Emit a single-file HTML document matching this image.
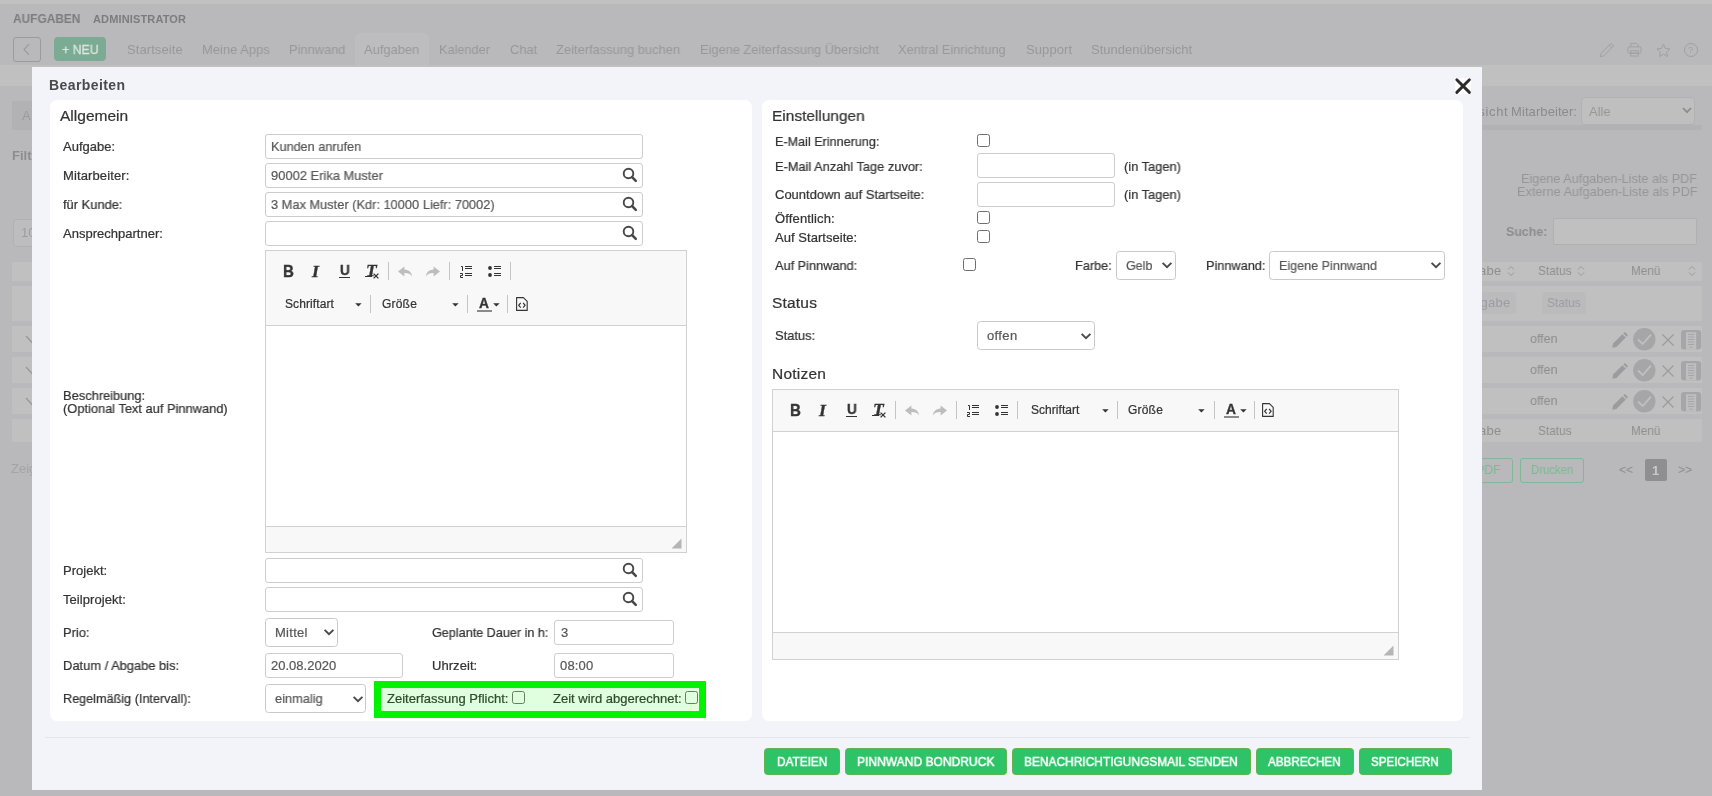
<!DOCTYPE html>
<html lang="de"><head><meta charset="utf-8"><title>Aufgaben</title>
<style>
html,body{margin:0;padding:0}
body{width:1712px;height:796px;overflow:hidden;position:relative;background:#b9b9bc;font-family:"Liberation Sans",sans-serif}
.a{position:absolute;box-sizing:border-box}
.t{position:absolute;white-space:pre;transform-origin:0 0;will-change:transform;font-family:"Liberation Sans",sans-serif}
.in{position:absolute;box-sizing:border-box;background:#fff;border:1px solid #cdcdcd;border-radius:3px}
.sel{position:absolute;box-sizing:border-box;background:#fff;border:1px solid #c9c9c9;border-radius:3.5px}
.cb{position:absolute;box-sizing:border-box;width:13px;height:13px;background:#fff;border:1px solid #6f6f6f;border-radius:2.5px}
.btn{position:absolute;box-sizing:border-box;background:#2dc366;border:1px solid #66b04f;border-radius:3.5px;height:27px;top:748px}
.sep{position:absolute;width:1px;background:#c4c4c4;height:18px}
.row{position:absolute;background:#c0c0c1;left:12px;width:1690px}
svg{position:absolute;overflow:visible}
.m{-webkit-text-stroke:0.22px currentColor}
.ser{font-family:"Liberation Serif",serif}
</style></head>
<body>
<!-- ================= dimmed background page ================= -->
<div class="a" style="left:0;top:0;width:1712px;height:4px;background:#c1c1c1"></div>
<div class="a" style="left:0;top:4px;width:1712px;height:61px;background:#b9b9bb"></div>
<div class="a" style="left:0;top:65px;width:1712px;height:20.5px;background:#c0c0c0"></div>
<!-- back button -->
<div class="a" style="left:13px;top:37px;width:28px;height:24.5px;border:1px solid #9b9b9d;border-radius:3px"></div>
<svg style="left:22px;top:43px" width="9" height="13" viewBox="0 0 9 13"><path d="M7 1.2 L2 6.5 L7 11.8" fill="none" stroke="#9b9b9d" stroke-width="1.2"/></svg>
<!-- NEU -->
<div class="a" style="left:54px;top:37px;width:52px;height:23.75px;background:#7bac93;border-radius:4px"></div>
<!-- active tab -->
<div class="a" style="left:355px;top:33.25px;width:73.75px;height:31.75px;background:#bdbdbf;border-radius:5px 5px 0 0"></div>
<!-- header icons -->
<svg style="left:1599px;top:42px" width="16" height="16" viewBox="0 0 16 16"><path d="M1.2 14.8 L2.2 11.2 L11.3 2.1 a1.3 1.3 0 0 1 1.8 0 l0.8 0.8 a1.3 1.3 0 0 1 0 1.8 L4.8 13.8 Z M10.2 3.2 L12.8 5.8" fill="none" stroke="#a0a0a2" stroke-width="1"/></svg>
<svg style="left:1627px;top:42px" width="15" height="15.5" viewBox="0 0 16 16" preserveAspectRatio="none"><g fill="none" stroke="#a0a0a2" stroke-width="1"><path d="M4 5 V1.5 H10.5 L12 3 V5"/><rect x="1" y="5" width="14" height="6.5" rx="1.5"/><rect x="4" y="9" width="8" height="5.5"/><path d="M4 11.5 H12"/></g></svg>
<svg style="left:1655.6px;top:42.6px" width="15" height="15" viewBox="0 0 15 15"><path d="M7.5 1.2 L9.4 5.4 L14 5.9 L10.6 9 L11.5 13.5 L7.5 11.2 L3.5 13.5 L4.4 9 L1 5.9 L5.6 5.4 Z" fill="none" stroke="#a0a0a2" stroke-width="1" stroke-linejoin="round"/></svg>
<div class="a" style="left:1684px;top:43px;width:14px;height:14px;border:1px solid #a0a0a2;border-radius:50%"></div>
<span class="t" style="left:1688.3px;top:45px;font-size:9.5px;line-height:10px;color:#a0a0a2">?</span>
<!-- filter select right -->
<div class="a" style="left:1580.5px;top:97px;width:114.5px;height:28px;border:1px solid #b1b1b3;border-radius:4px;background:#bfbfc0"></div>
<svg style="left:1681.5px;top:107px" width="10" height="7" viewBox="0 0 10 7"><path d="M1 1 L5 5.2 L9 1" fill="none" stroke="#8d8d8f" stroke-width="1.8"/></svg>
<div class="a" style="left:12px;top:125px;width:1690px;height:5px;background:#b2b2b4"></div>
<!-- left bits -->
<div class="a" style="left:12px;top:101px;width:40px;height:28.5px;background:#b2b2b4"></div>
<div class="a" style="left:12.5px;top:218.5px;width:60px;height:28px;border:1px solid #b1b1b3;border-radius:4px;background:#bdbdbf"></div>
<!-- search input -->
<div class="a" style="left:1553.3px;top:218px;width:143.5px;height:26.6px;border:1px solid #b0b0b2;border-radius:2px;background:#c0c0c1"></div>
<!-- table rows -->
<div class="row" style="top:262px;height:18.5px"></div>
<div class="row" style="top:285.6px;height:35px"></div>
<div class="row" style="top:326px;height:26px"></div>
<div class="row" style="top:356.7px;height:26px"></div>
<div class="row" style="top:388px;height:26px"></div>
<div class="row" style="top:419px;height:23px"></div>
<div class="a" style="left:1456px;top:292px;width:60px;height:22px;background:#bbbbbd;border-radius:3px"></div>
<div class="a" style="left:1542px;top:292px;width:44px;height:22px;background:#bbbbbd;border-radius:3px"></div>
<svg style="left:1507.00px;top:265px" width="8" height="12" viewBox="0 0 8 12"><path d="M1 4.6 L4 1.4 L7 4.6 M1 7.4 L4 10.6 L7 7.4" fill="none" stroke="#9c9c9e" stroke-width="1"/></svg>
<svg style="left:1576.50px;top:265px" width="8" height="12" viewBox="0 0 8 12"><path d="M1 4.6 L4 1.4 L7 4.6 M1 7.4 L4 10.6 L7 7.4" fill="none" stroke="#9c9c9e" stroke-width="1"/></svg>
<svg style="left:1688.30px;top:265px" width="8" height="12" viewBox="0 0 8 12"><path d="M1 4.6 L4 1.4 L7 4.6 M1 7.4 L4 10.6 L7 7.4" fill="none" stroke="#9c9c9e" stroke-width="1"/></svg>
<svg style="left:1612px;top:332.20px" width="16" height="16" viewBox="0 0 16 16"><path d="M0.3 15.7 L1 11.6 L10.4 2.2 L13.8 5.6 L4.4 15 Z M11.3 1.3 L12.2 0.5 a1 1 0 0 1 1.4 0 L15.5 2.4 a1 1 0 0 1 0 1.4 L14.7 4.7 Z" fill="#9c9c9e"/></svg>
<svg style="left:1632.7px;top:327.60px" width="23" height="23" viewBox="0 0 23 23"><circle cx="11.3" cy="11.3" r="11.2" fill="#a6a6a8"/><path d="M5 11.5 L9.7 16 L18 6.6" fill="none" stroke="#c0c0c1" stroke-width="1.8"/></svg>
<svg style="left:1662px;top:334.20px" width="12" height="12" viewBox="0 0 12 12"><path d="M0.5 0.5 L11.5 11.5 M11.5 0.5 L0.5 11.5" stroke="#9c9c9e" stroke-width="1.3" fill="none"/></svg>
<svg style="left:1680.8px;top:329.70px" width="21" height="20" viewBox="0 0 21 20"><rect x="0" y="0" width="20.2" height="19.6" rx="3" fill="#a6a6a8"/><rect x="5" y="2.2" width="10.2" height="17.4" fill="#bebebf"/><g stroke="#a6a6a8" stroke-width="1.1"><path d="M7 4.5 H13.2 M7 7 H13.2 M7 9.5 H13.2 M7 12 H13.2 M7 14.5 H13.2 M8.5 17.2 H11.7"/></g></svg>
<svg style="left:1612px;top:363.20px" width="16" height="16" viewBox="0 0 16 16"><path d="M0.3 15.7 L1 11.6 L10.4 2.2 L13.8 5.6 L4.4 15 Z M11.3 1.3 L12.2 0.5 a1 1 0 0 1 1.4 0 L15.5 2.4 a1 1 0 0 1 0 1.4 L14.7 4.7 Z" fill="#9c9c9e"/></svg>
<svg style="left:1632.7px;top:358.60px" width="23" height="23" viewBox="0 0 23 23"><circle cx="11.3" cy="11.3" r="11.2" fill="#a6a6a8"/><path d="M5 11.5 L9.7 16 L18 6.6" fill="none" stroke="#c0c0c1" stroke-width="1.8"/></svg>
<svg style="left:1662px;top:365.20px" width="12" height="12" viewBox="0 0 12 12"><path d="M0.5 0.5 L11.5 11.5 M11.5 0.5 L0.5 11.5" stroke="#9c9c9e" stroke-width="1.3" fill="none"/></svg>
<svg style="left:1680.8px;top:360.70px" width="21" height="20" viewBox="0 0 21 20"><rect x="0" y="0" width="20.2" height="19.6" rx="3" fill="#a6a6a8"/><rect x="5" y="2.2" width="10.2" height="17.4" fill="#bebebf"/><g stroke="#a6a6a8" stroke-width="1.1"><path d="M7 4.5 H13.2 M7 7 H13.2 M7 9.5 H13.2 M7 12 H13.2 M7 14.5 H13.2 M8.5 17.2 H11.7"/></g></svg>
<svg style="left:1612px;top:394.20px" width="16" height="16" viewBox="0 0 16 16"><path d="M0.3 15.7 L1 11.6 L10.4 2.2 L13.8 5.6 L4.4 15 Z M11.3 1.3 L12.2 0.5 a1 1 0 0 1 1.4 0 L15.5 2.4 a1 1 0 0 1 0 1.4 L14.7 4.7 Z" fill="#9c9c9e"/></svg>
<svg style="left:1632.7px;top:389.60px" width="23" height="23" viewBox="0 0 23 23"><circle cx="11.3" cy="11.3" r="11.2" fill="#a6a6a8"/><path d="M5 11.5 L9.7 16 L18 6.6" fill="none" stroke="#c0c0c1" stroke-width="1.8"/></svg>
<svg style="left:1662px;top:396.20px" width="12" height="12" viewBox="0 0 12 12"><path d="M0.5 0.5 L11.5 11.5 M11.5 0.5 L0.5 11.5" stroke="#9c9c9e" stroke-width="1.3" fill="none"/></svg>
<svg style="left:1680.8px;top:391.70px" width="21" height="20" viewBox="0 0 21 20"><rect x="0" y="0" width="20.2" height="19.6" rx="3" fill="#a6a6a8"/><rect x="5" y="2.2" width="10.2" height="17.4" fill="#bebebf"/><g stroke="#a6a6a8" stroke-width="1.1"><path d="M7 4.5 H13.2 M7 7 H13.2 M7 9.5 H13.2 M7 12 H13.2 M7 14.5 H13.2 M8.5 17.2 H11.7"/></g></svg>
<svg style="left:25px;top:335.20px" width="14" height="9" viewBox="0 0 14 9"><path d="M1 1 L7 7.5 L13 1" fill="none" stroke="#98989a" stroke-width="1.4"/></svg>
<svg style="left:25px;top:366.20px" width="14" height="9" viewBox="0 0 14 9"><path d="M1 1 L7 7.5 L13 1" fill="none" stroke="#98989a" stroke-width="1.4"/></svg>
<svg style="left:25px;top:397.20px" width="14" height="9" viewBox="0 0 14 9"><path d="M1 1 L7 7.5 L13 1" fill="none" stroke="#98989a" stroke-width="1.4"/></svg>
<!-- bottom buttons -->
<div class="a" style="left:1452px;top:458px;width:60.7px;height:24.8px;border:1px solid #7db995;border-radius:3px"></div>
<div class="a" style="left:1520px;top:458px;width:64px;height:24.8px;border:1px solid #7db995;border-radius:3px"></div>
<div class="a" style="left:1645px;top:459.3px;width:22px;height:21.6px;background:#8f8f91;border-radius:2px"></div>
<span class="t" style="left:12.69px;top:13.00px;font-size:12.5px;line-height:12.5px;color:#7c7c7e;font-weight:700;transform:scaleX(0.9510);">AUFGABEN</span>
<span class="t" style="left:92.50px;top:14.00px;font-size:11px;line-height:11px;color:#7c7c7e;font-weight:700;letter-spacing:0.144px;">ADMINISTRATOR</span>
<span class="t" style="left:61.91px;top:43.00px;font-size:13px;line-height:13px;color:#dbe6e0;transform:scaleX(0.9486);-webkit-text-stroke:0.3px #dbe6e0;">+ NEU</span>
<span class="t" style="left:126.92px;top:43.00px;font-size:13px;line-height:13px;color:#98989a;letter-spacing:0.083px;">Startseite</span>
<span class="t" style="left:201.91px;top:43.00px;font-size:13px;line-height:13px;color:#98989a;transform:scaleX(0.9961);">Meine Apps</span>
<span class="t" style="left:288.67px;top:43.00px;font-size:13px;line-height:13px;color:#98989a;transform:scaleX(0.9879);">Pinnwand</span>
<span class="t" style="left:364.42px;top:43.00px;font-size:13px;line-height:13px;color:#98989a;transform:scaleX(0.9910);">Aufgaben</span>
<span class="t" style="left:438.92px;top:43.00px;font-size:13px;line-height:13px;color:#98989a;transform:scaleX(0.9783);">Kalender</span>
<span class="t" style="left:509.67px;top:43.00px;font-size:13px;line-height:13px;color:#98989a;transform:scaleX(0.9891);">Chat</span>
<span class="t" style="left:556.41px;top:43.00px;font-size:13px;line-height:13px;color:#98989a;transform:scaleX(0.9931);">Zeiterfassung buchen</span>
<span class="t" style="left:700.16px;top:43.00px;font-size:13px;line-height:13px;color:#98989a;transform:scaleX(0.9865);">Eigene Zeiterfassung Übersicht</span>
<span class="t" style="left:898.41px;top:43.00px;font-size:13px;line-height:13px;color:#98989a;transform:scaleX(0.9802);">Xentral Einrichtung</span>
<span class="t" style="left:1025.66px;top:43.00px;font-size:13px;line-height:13px;color:#98989a;letter-spacing:0.104px;">Support</span>
<span class="t" style="left:1091.41px;top:43.00px;font-size:13px;line-height:13px;color:#98989a;transform:scaleX(0.9998);">Stundenübersicht</span>
<span class="t" style="left:1510.91px;top:105.00px;font-size:13px;line-height:13px;color:#8b8b8d;letter-spacing:0.085px;">Mitarbeiter:</span>
<span class="t" style="left:1461.41px;top:105.00px;font-size:13px;line-height:13px;color:#8b8b8d;letter-spacing:0.672px;">Ansicht</span>
<span class="t" style="left:1589.41px;top:105.00px;font-size:13px;line-height:13px;color:#98989a;transform:scaleX(0.9900);">Alle</span>
<span class="t" style="left:1521.41px;top:172.00px;font-size:13px;line-height:13px;color:#969698;transform:scaleX(0.9740);">Eigene Aufgaben-Liste als PDF</span>
<span class="t" style="left:1516.82px;top:185.00px;font-size:13px;line-height:13px;color:#969698;transform:scaleX(0.9761);">Externe Aufgaben-Liste als PDF</span>
<span class="t" style="left:1506.12px;top:225.00px;font-size:13px;line-height:13px;color:#8d8d8f;font-weight:700;transform:scaleX(0.9545);">Suche:</span>
<span class="t" style="left:1455.41px;top:264.00px;font-size:13px;line-height:13px;color:#8f8f91;letter-spacing:0.268px;">Abgabe</span>
<span class="t" style="left:1538.12px;top:264.00px;font-size:13px;line-height:13px;color:#8f8f91;transform:scaleX(0.9135);">Status</span>
<span class="t" style="left:1631.12px;top:264.00px;font-size:13px;line-height:13px;color:#8f8f91;transform:scaleX(0.9059);">Menü</span>
<span class="t" style="left:1464.41px;top:296.00px;font-size:13px;line-height:13px;color:#9d9d9f;letter-spacing:0.268px;">Abgabe</span>
<span class="t" style="left:1546.91px;top:296.00px;font-size:13px;line-height:13px;color:#9d9d9f;transform:scaleX(0.9189);">Status</span>
<span class="t" style="left:1529.62px;top:332.00px;font-size:13px;line-height:13px;color:#8d8d8f;transform:scaleX(0.9576);">offen</span>
<span class="t" style="left:1529.62px;top:363.00px;font-size:13px;line-height:13px;color:#8d8d8f;transform:scaleX(0.9576);">offen</span>
<span class="t" style="left:1529.62px;top:394.00px;font-size:13px;line-height:13px;color:#8d8d8f;transform:scaleX(0.9576);">offen</span>
<span class="t" style="left:1455.41px;top:424.00px;font-size:13px;line-height:13px;color:#8f8f91;letter-spacing:0.268px;">Abgabe</span>
<span class="t" style="left:1538.12px;top:424.00px;font-size:13px;line-height:13px;color:#8f8f91;transform:scaleX(0.9135);">Status</span>
<span class="t" style="left:1631.12px;top:424.00px;font-size:13px;line-height:13px;color:#8f8f91;transform:scaleX(0.9059);">Menü</span>
<span class="t" style="left:1476.41px;top:463.00px;font-size:13px;line-height:13px;color:#7db995;transform:scaleX(0.9488);">PDF</span>
<span class="t" style="left:1530.71px;top:463.00px;font-size:13px;line-height:13px;color:#7db995;transform:scaleX(0.8709);">Drucken</span>
<span class="t" style="left:1618.71px;top:463.00px;font-size:13px;line-height:13px;color:#8d8d8f;transform:scaleX(0.9330);"><<</span>
<span class="t" style="left:1678.41px;top:463.00px;font-size:13px;line-height:13px;color:#8d8d8f;transform:scaleX(0.9330);">>></span>
<span class="t" style="left:1651.91px;top:464.00px;font-size:13px;line-height:13px;color:#c9c9c9;font-weight:700;">1</span>
<span class="t" style="left:22.41px;top:109.00px;font-size:13px;line-height:13px;color:#9c9c9e;">A</span>
<span class="t" style="left:11.82px;top:149.00px;font-size:13px;line-height:13px;color:#8d8d8f;font-weight:700;">Filter</span>
<span class="t" style="left:21.41px;top:226.00px;font-size:13px;line-height:13px;color:#9e9ea0;">10</span>
<span class="t" style="left:11.41px;top:462.00px;font-size:13px;line-height:13px;color:#a4a4a6;">Zeige</span>

<!-- ================= modal ================= -->
<div class="a" style="left:32px;top:67px;width:1450px;height:722.5px;background:#f3f4fa"></div>
<div class="a" style="left:50px;top:100px;width:702px;height:621px;background:#fff;border-radius:7px"></div>
<div class="a" style="left:762px;top:100px;width:701px;height:621px;background:#fff;border-radius:7px"></div>
<div class="a" style="left:45px;top:737px;width:1424.5px;height:1px;background:#e4e5ea"></div>
<!-- close -->
<div class="a" style="left:1455px;top:78px;width:16px;height:16px;background:#fff"></div>
<svg style="left:1455px;top:78px" width="16" height="16" viewBox="0 0 16 16"><path d="M1.8 1.8 L14.4 14.4 M14.4 1.8 L1.8 14.4" stroke="#2d2d2d" stroke-width="2.9" stroke-linecap="round" fill="none"/></svg>

<!-- left inputs -->
<div class="in" style="left:265px;top:134px;width:377.75px;height:24.75px"></div>
<div class="in" style="left:265px;top:163px;width:377.75px;height:24.75px"></div>
<div class="in" style="left:265px;top:192px;width:377.75px;height:24.75px"></div>
<div class="in" style="left:265px;top:221px;width:377.75px;height:24.75px"></div>
<div class="in" style="left:265px;top:558px;width:377.75px;height:24.75px"></div>
<div class="in" style="left:265px;top:587px;width:377.75px;height:24.75px"></div>
<svg style="left:622.30px;top:167.20px" width="16" height="16" viewBox="0 0 16 16"><circle cx="6.5" cy="6.5" r="4.8" fill="none" stroke="#484848" stroke-width="1.9"/><path d="M10 10 L13.8 13.8" stroke="#484848" stroke-width="2.5" stroke-linecap="round"/></svg>
<svg style="left:622.30px;top:196.20px" width="16" height="16" viewBox="0 0 16 16"><circle cx="6.5" cy="6.5" r="4.8" fill="none" stroke="#484848" stroke-width="1.9"/><path d="M10 10 L13.8 13.8" stroke="#484848" stroke-width="2.5" stroke-linecap="round"/></svg>
<svg style="left:622.30px;top:225.20px" width="16" height="16" viewBox="0 0 16 16"><circle cx="6.5" cy="6.5" r="4.8" fill="none" stroke="#484848" stroke-width="1.9"/><path d="M10 10 L13.8 13.8" stroke="#484848" stroke-width="2.5" stroke-linecap="round"/></svg>
<svg style="left:622.30px;top:562.20px" width="16" height="16" viewBox="0 0 16 16"><circle cx="6.5" cy="6.5" r="4.8" fill="none" stroke="#484848" stroke-width="1.9"/><path d="M10 10 L13.8 13.8" stroke="#484848" stroke-width="2.5" stroke-linecap="round"/></svg>
<svg style="left:622.30px;top:591.20px" width="16" height="16" viewBox="0 0 16 16"><circle cx="6.5" cy="6.5" r="4.8" fill="none" stroke="#484848" stroke-width="1.9"/><path d="M10 10 L13.8 13.8" stroke="#484848" stroke-width="2.5" stroke-linecap="round"/></svg>
<!-- editor 1 -->
<div class="a" style="left:265px;top:250px;width:422px;height:303.25px;background:#f8f8f8;border:1px solid #d1d1d1"></div>
<div class="a" style="left:266px;top:325px;width:420px;height:201.5px;background:#fff;border-top:1px solid #d1d1d1;border-bottom:1px solid #d1d1d1"></div>
<span class="t" style="left:282.70px;top:262.80px;font-size:16.6px;line-height:17px;font-weight:700;color:#333;-webkit-text-stroke:0.4px #333;transform:scaleX(0.9);transform-origin:0 0">B</span>
<span class="t ser" style="left:311.50px;top:263.00px;font-size:17.6px;line-height:17px;font-weight:700;font-style:italic;color:#333;-webkit-text-stroke:0.4px #333">I</span>
<span class="t" style="left:339.50px;top:263.00px;font-size:14.4px;line-height:15px;font-weight:700;color:#333;-webkit-text-stroke:0.3px #333;transform:scaleX(0.95);transform-origin:0 0">U</span>
<div class="a" style="left:338.90px;top:276.90px;width:11.2px;height:1.1px;background:#333"></div>
<span class="t ser" style="left:365.50px;top:262.00px;font-size:17.5px;line-height:17px;font-weight:700;font-style:italic;color:#333;-webkit-text-stroke:0.35px #333">T</span>
<div class="a" style="left:365.10px;top:275.90px;width:7.4px;height:1.1px;background:#333"></div>
<svg style="left:372.80px;top:273.00px" width="6" height="6" viewBox="0 0 6 6"><path d="M0.6 0.6 L5.4 5.4 M5.4 0.6 L0.6 5.4" stroke="#333" stroke-width="1.3" fill="none"/></svg>
<div class="sep" style="left:388.00px;top:262.00px"></div>
<svg style="left:398.20px;top:265.80px" width="14" height="11" viewBox="0 0 14 10.2"><path d="M0 5.2 L6.4 0 V3.1 C11.3 3.3 13.9 6.2 14 10.2 C12.3 7.4 10.1 6.6 6.4 6.7 V10.2 Z" fill="#bdbdbd"/></svg>
<svg style="left:425.70px;top:265.80px" width="14" height="11" viewBox="0 0 14 10.2"><path d="M0 5.2 L6.4 0 V3.1 C11.3 3.3 13.9 6.2 14 10.2 C12.3 7.4 10.1 6.6 6.4 6.7 V10.2 Z" fill="#bdbdbd" transform="translate(14,0) scale(-1,1)"/></svg>
<div class="sep" style="left:449.00px;top:262.00px"></div>
<svg style="left:460px;top:265px" width="13" height="14" viewBox="0 0 13 14"><g fill="#333"><rect x="5" y="1" width="7" height="1"/><rect x="5" y="3" width="7" height="1"/><rect x="5" y="8" width="7" height="1"/><rect x="5" y="10" width="7" height="1"/></g><path d="M1 1.5 H2.5 V6" stroke="#333" stroke-width="1" fill="none"/><path d="M0 8.5 H2.5 V10.5 H0.5 V12.5 H3" stroke="#333" stroke-width="1" fill="none"/></svg>
<svg style="left:488px;top:265px" width="15" height="14" viewBox="0 0 15 14"><circle cx="2" cy="3" r="1.9" fill="#333"/><circle cx="2" cy="10" r="1.9" fill="#333"/><g fill="#333"><rect x="6" y="1" width="7" height="1"/><rect x="6" y="3" width="7" height="1"/><rect x="6" y="8" width="7" height="1"/><rect x="6" y="10" width="7" height="1"/></g></svg>
<div class="sep" style="left:510.00px;top:262.00px"></div>
<svg style="left:355.00px;top:303.10px" width="7" height="4" viewBox="0 0 7 4"><path d="M0.2 0.2 H6.6 L3.4 3.5 Z" fill="#333"/></svg>
<div class="sep" style="left:370.00px;top:295.20px"></div>
<svg style="left:451.80px;top:303.10px" width="7" height="4" viewBox="0 0 7 4"><path d="M0.2 0.2 H6.6 L3.4 3.5 Z" fill="#333"/></svg>
<div class="sep" style="left:467.00px;top:295.20px"></div>
<span class="t" style="left:479.10px;top:296.50px;font-size:13.8px;line-height:14px;font-weight:700;color:#333;-webkit-text-stroke:0.3px #333">A</span>
<div class="a" style="left:477.00px;top:310.30px;width:15px;height:1.8px;background:#8a8a8a"></div>
<svg style="left:493.00px;top:303.10px" width="7" height="4" viewBox="0 0 7 4"><path d="M0.2 0.2 H6.6 L3.4 3.5 Z" fill="#333"/></svg>
<div class="sep" style="left:507.00px;top:295.20px"></div>
<svg style="left:515.80px;top:297.10px" width="12" height="14" viewBox="0 0 12 14"><path d="M0.6 0.6 H7.4 L11.2 4.4 V13.4 H0.6 Z" fill="none" stroke="#333" stroke-width="1.1" stroke-linejoin="round"/><path d="M4.7 5.9 L2.7 8.3 L4.7 10.7 M7.1 5.9 L9.1 8.3 L7.1 10.7" fill="none" stroke="#333" stroke-width="1.2"/></svg>
<svg style="left:671px;top:538px" width="11" height="11" viewBox="0 0 11 11"><path d="M10.5 0.5 V10.5 H0.5 Z" fill="#b5b5b5"/></svg>

<div class="sel" style="left:265px;top:618px;width:72.75px;height:28.75px"></div>
<svg style="left:324.25px;top:629px" width="10" height="7" viewBox="0 0 10 7"><path d="M0.6 0.8 L5 5.2 L9.4 0.8" fill="none" stroke="#4a4a4a" stroke-width="1.9"/></svg>
<div class="in" style="left:554.25px;top:620.25px;width:119.5px;height:24.5px"></div>
<div class="in" style="left:265px;top:653.25px;width:137.75px;height:24.5px"></div>
<div class="in" style="left:554.25px;top:653.25px;width:119.5px;height:24.5px"></div>
<div class="sel" style="left:265px;top:684.25px;width:100.75px;height:28.75px"></div>
<svg style="left:352.5px;top:695.5px" width="10" height="7" viewBox="0 0 10 7"><path d="M0.6 0.8 L5 5.2 L9.4 0.8" fill="none" stroke="#4a4a4a" stroke-width="1.9"/></svg>
<!-- green highlight -->
<div class="cb" style="left:512px;top:691px"></div>
<div class="cb" style="left:685px;top:691px"></div>

<!-- right panel -->
<div class="cb" style="left:977px;top:134px"></div>
<div class="in" style="left:977px;top:153px;width:137.75px;height:24.5px"></div>
<div class="in" style="left:977px;top:182px;width:137.75px;height:24.5px"></div>
<div class="cb" style="left:977px;top:211px"></div>
<div class="cb" style="left:977px;top:230px"></div>
<div class="cb" style="left:962.75px;top:258px"></div>
<div class="sel" style="left:1116.25px;top:251px;width:59.5px;height:28.75px"></div>
<svg style="left:1162px;top:262.25px" width="10" height="7" viewBox="0 0 10 7"><path d="M0.6 0.8 L5 5.2 L9.4 0.8" fill="none" stroke="#4a4a4a" stroke-width="1.9"/></svg>
<div class="sel" style="left:1269.25px;top:251px;width:175.5px;height:28.75px"></div>
<svg style="left:1431.25px;top:262.25px" width="10" height="7" viewBox="0 0 10 7"><path d="M0.6 0.8 L5 5.2 L9.4 0.8" fill="none" stroke="#4a4a4a" stroke-width="1.9"/></svg>
<div class="sel" style="left:977.25px;top:321.25px;width:117.5px;height:28.75px"></div>
<svg style="left:1081.25px;top:332.5px" width="10" height="7" viewBox="0 0 10 7"><path d="M0.6 0.8 L5 5.2 L9.4 0.8" fill="none" stroke="#4a4a4a" stroke-width="1.9"/></svg>
<!-- editor 2 -->
<div class="a" style="left:772px;top:389px;width:627px;height:270.5px;background:#f8f8f8;border:1px solid #d1d1d1"></div>
<div class="a" style="left:773px;top:431px;width:625px;height:201.5px;background:#fff;border-top:1px solid #d1d1d1;border-bottom:1px solid #d1d1d1"></div>
<span class="t" style="left:789.70px;top:401.80px;font-size:16.6px;line-height:17px;font-weight:700;color:#333;-webkit-text-stroke:0.4px #333;transform:scaleX(0.9);transform-origin:0 0">B</span>
<span class="t ser" style="left:818.50px;top:402.00px;font-size:17.6px;line-height:17px;font-weight:700;font-style:italic;color:#333;-webkit-text-stroke:0.4px #333">I</span>
<span class="t" style="left:846.50px;top:402.00px;font-size:14.4px;line-height:15px;font-weight:700;color:#333;-webkit-text-stroke:0.3px #333;transform:scaleX(0.95);transform-origin:0 0">U</span>
<div class="a" style="left:845.90px;top:415.90px;width:11.2px;height:1.1px;background:#333"></div>
<span class="t ser" style="left:872.50px;top:401.00px;font-size:17.5px;line-height:17px;font-weight:700;font-style:italic;color:#333;-webkit-text-stroke:0.35px #333">T</span>
<div class="a" style="left:872.10px;top:414.90px;width:7.4px;height:1.1px;background:#333"></div>
<svg style="left:879.80px;top:412.00px" width="6" height="6" viewBox="0 0 6 6"><path d="M0.6 0.6 L5.4 5.4 M5.4 0.6 L0.6 5.4" stroke="#333" stroke-width="1.3" fill="none"/></svg>
<div class="sep" style="left:895.00px;top:401.00px"></div>
<svg style="left:905.20px;top:404.80px" width="14" height="11" viewBox="0 0 14 10.2"><path d="M0 5.2 L6.4 0 V3.1 C11.3 3.3 13.9 6.2 14 10.2 C12.3 7.4 10.1 6.6 6.4 6.7 V10.2 Z" fill="#bdbdbd"/></svg>
<svg style="left:932.70px;top:404.80px" width="14" height="11" viewBox="0 0 14 10.2"><path d="M0 5.2 L6.4 0 V3.1 C11.3 3.3 13.9 6.2 14 10.2 C12.3 7.4 10.1 6.6 6.4 6.7 V10.2 Z" fill="#bdbdbd" transform="translate(14,0) scale(-1,1)"/></svg>
<div class="sep" style="left:956.00px;top:401.00px"></div>
<svg style="left:967px;top:404px" width="13" height="14" viewBox="0 0 13 14"><g fill="#333"><rect x="5" y="1" width="7" height="1"/><rect x="5" y="3" width="7" height="1"/><rect x="5" y="8" width="7" height="1"/><rect x="5" y="10" width="7" height="1"/></g><path d="M1 1.5 H2.5 V6" stroke="#333" stroke-width="1" fill="none"/><path d="M0 8.5 H2.5 V10.5 H0.5 V12.5 H3" stroke="#333" stroke-width="1" fill="none"/></svg>
<svg style="left:995px;top:404px" width="15" height="14" viewBox="0 0 15 14"><circle cx="2" cy="3" r="1.9" fill="#333"/><circle cx="2" cy="10" r="1.9" fill="#333"/><g fill="#333"><rect x="6" y="1" width="7" height="1"/><rect x="6" y="3" width="7" height="1"/><rect x="6" y="8" width="7" height="1"/><rect x="6" y="10" width="7" height="1"/></g></svg>
<div class="sep" style="left:1017.00px;top:401.00px"></div>
<svg style="left:1101.50px;top:409.10px" width="7" height="4" viewBox="0 0 7 4"><path d="M0.2 0.2 H6.6 L3.4 3.5 Z" fill="#333"/></svg>
<div class="sep" style="left:1116.50px;top:401.20px"></div>
<svg style="left:1198.30px;top:409.10px" width="7" height="4" viewBox="0 0 7 4"><path d="M0.2 0.2 H6.6 L3.4 3.5 Z" fill="#333"/></svg>
<div class="sep" style="left:1213.50px;top:401.20px"></div>
<span class="t" style="left:1225.60px;top:402.50px;font-size:13.8px;line-height:14px;font-weight:700;color:#333;-webkit-text-stroke:0.3px #333">A</span>
<div class="a" style="left:1223.50px;top:416.30px;width:15px;height:1.8px;background:#8a8a8a"></div>
<svg style="left:1239.50px;top:409.10px" width="7" height="4" viewBox="0 0 7 4"><path d="M0.2 0.2 H6.6 L3.4 3.5 Z" fill="#333"/></svg>
<div class="sep" style="left:1253.50px;top:401.20px"></div>
<svg style="left:1262.30px;top:403.10px" width="12" height="14" viewBox="0 0 12 14"><path d="M0.6 0.6 H7.4 L11.2 4.4 V13.4 H0.6 Z" fill="none" stroke="#333" stroke-width="1.1" stroke-linejoin="round"/><path d="M4.7 5.9 L2.7 8.3 L4.7 10.7 M7.1 5.9 L9.1 8.3 L7.1 10.7" fill="none" stroke="#333" stroke-width="1.2"/></svg>
<svg style="left:1383px;top:644.5px" width="11" height="11" viewBox="0 0 11 11"><path d="M10.5 0.5 V10.5 H0.5 Z" fill="#b5b5b5"/></svg>

<!-- buttons -->
<div class="btn" style="left:764px;width:76px"></div>
<div class="btn" style="left:845px;width:161.75px"></div>
<div class="btn" style="left:1012px;width:239px"></div>
<div class="btn" style="left:1256px;width:98px"></div>
<div class="btn" style="left:1359px;width:93px"></div>
<span class="t" style="left:48.87px;top:78.00px;font-size:14px;line-height:14px;color:#4a4a4c;font-weight:700;letter-spacing:0.406px;">Bearbeiten</span>
<span class="t m" style="left:60.05px;top:108.00px;font-size:15.5px;line-height:15.5px;color:#333;letter-spacing:0.010px;">Allgemein</span>
<span class="t m" style="left:62.91px;top:140.00px;font-size:13px;line-height:13px;color:#333;transform:scaleX(0.9976);">Aufgabe:</span>
<span class="t m" style="left:62.91px;top:169.00px;font-size:13px;line-height:13px;color:#333;letter-spacing:0.126px;">Mitarbeiter:</span>
<span class="t m" style="left:62.91px;top:198.00px;font-size:13px;line-height:13px;color:#333;transform:scaleX(0.9903);">für Kunde:</span>
<span class="t m" style="left:62.91px;top:227.00px;font-size:13px;line-height:13px;color:#333;letter-spacing:0.012px;">Ansprechpartner:</span>
<span class="t m" style="left:62.91px;top:389.00px;font-size:13px;line-height:13px;color:#333;transform:scaleX(0.9885);">Beschreibung:</span>
<span class="t m" style="left:62.91px;top:402.00px;font-size:13px;line-height:13px;color:#333;transform:scaleX(0.9878);">(Optional Text auf Pinnwand)</span>
<span class="t m" style="left:62.91px;top:564.00px;font-size:13px;line-height:13px;color:#333;letter-spacing:0.013px;">Projekt:</span>
<span class="t m" style="left:62.91px;top:593.00px;font-size:13px;line-height:13px;color:#333;letter-spacing:0.071px;">Teilprojekt:</span>
<span class="t m" style="left:62.91px;top:626.00px;font-size:13px;line-height:13px;color:#333;transform:scaleX(0.9882);">Prio:</span>
<span class="t m" style="left:62.91px;top:659.00px;font-size:13px;line-height:13px;color:#333;transform:scaleX(0.9922);">Datum / Abgabe bis:</span>
<span class="t m" style="left:62.91px;top:692.00px;font-size:13px;line-height:13px;color:#333;transform:scaleX(0.9728);">Regelmäßig (Intervall):</span>
<span class="t m" style="left:271.17px;top:140.00px;font-size:13px;line-height:13px;color:#585858;transform:scaleX(0.9745);">Kunden anrufen</span>
<span class="t m" style="left:271.17px;top:169.00px;font-size:13px;line-height:13px;color:#585858;transform:scaleX(0.9928);">90002 Erika Muster</span>
<span class="t m" style="left:271.17px;top:198.00px;font-size:13px;line-height:13px;color:#585858;transform:scaleX(0.9858);">3 Max Muster (Kdr: 10000 Liefr: 70002)</span>
<span class="t m" style="left:275.17px;top:626.00px;font-size:13px;line-height:13px;color:#585858;letter-spacing:0.272px;">Mittel</span>
<span class="t m" style="left:275.17px;top:692.00px;font-size:13px;line-height:13px;color:#585858;transform:scaleX(0.9845);">einmalig</span>
<span class="t m" style="left:271.17px;top:659.00px;font-size:13px;line-height:13px;color:#585858;letter-spacing:0.010px;">20.08.2020</span>
<span class="t m" style="left:431.92px;top:626.00px;font-size:13px;line-height:13px;color:#333;transform:scaleX(0.9704);">Geplante Dauer in h:</span>
<span class="t m" style="left:431.92px;top:659.00px;font-size:13px;line-height:13px;color:#333;letter-spacing:0.053px;">Uhrzeit:</span>
<span class="t m" style="left:560.66px;top:626.00px;font-size:13px;line-height:13px;color:#585858;">3</span>
<span class="t m" style="left:560.41px;top:659.00px;font-size:13px;line-height:13px;color:#585858;letter-spacing:0.156px;">08:00</span>
<span class="t m" style="left:387.17px;top:692.00px;font-size:13px;line-height:13px;color:#333;">Zeiterfassung Pflicht:</span>
<span class="t m" style="left:553.16px;top:692.00px;font-size:13px;line-height:13px;color:#333;">Zeit wird abgerechnet:</span>
<span class="t m" style="left:284.96px;top:298.00px;font-size:12px;line-height:12px;color:#333;letter-spacing:0.090px;">Schriftart</span>
<span class="t m" style="left:381.96px;top:298.00px;font-size:12px;line-height:12px;color:#333;letter-spacing:0.204px;">Größe</span>
<span class="t m" style="left:772.30px;top:108.00px;font-size:15.5px;line-height:15.5px;color:#333;transform:scaleX(0.9953);">Einstellungen</span>
<span class="t m" style="left:775.16px;top:135.00px;font-size:13px;line-height:13px;color:#333;transform:scaleX(0.9699);">E-Mail Erinnerung:</span>
<span class="t m" style="left:775.16px;top:160.00px;font-size:13px;line-height:13px;color:#333;transform:scaleX(0.9841);">E-Mail Anzahl Tage zuvor:</span>
<span class="t m" style="left:775.16px;top:188.00px;font-size:13px;line-height:13px;color:#333;transform:scaleX(0.9972);">Countdown auf Startseite:</span>
<span class="t m" style="left:775.16px;top:212.00px;font-size:13px;line-height:13px;color:#333;letter-spacing:0.137px;">Öffentlich:</span>
<span class="t m" style="left:775.16px;top:231.00px;font-size:13px;line-height:13px;color:#333;letter-spacing:0.037px;">Auf Startseite:</span>
<span class="t m" style="left:775.16px;top:259.00px;font-size:13px;line-height:13px;color:#333;transform:scaleX(0.9800);">Auf Pinnwand:</span>
<span class="t m" style="left:775.16px;top:329.00px;font-size:13px;line-height:13px;color:#333;transform:scaleX(0.9926);">Status:</span>
<span class="t m" style="left:1123.66px;top:160.00px;font-size:13px;line-height:13px;color:#333;transform:scaleX(0.9886);">(in Tagen)</span>
<span class="t m" style="left:1123.66px;top:188.00px;font-size:13px;line-height:13px;color:#333;transform:scaleX(0.9886);">(in Tagen)</span>
<span class="t m" style="left:1075.16px;top:259.00px;font-size:13px;line-height:13px;color:#333;transform:scaleX(0.9758);">Farbe:</span>
<span class="t m" style="left:1126.16px;top:259.00px;font-size:13px;line-height:13px;color:#585858;transform:scaleX(0.9618);">Gelb</span>
<span class="t m" style="left:1206.16px;top:259.00px;font-size:13px;line-height:13px;color:#333;transform:scaleX(0.9786);">Pinnwand:</span>
<span class="t m" style="left:1278.91px;top:259.00px;font-size:13px;line-height:13px;color:#585858;transform:scaleX(0.9676);">Eigene Pinnwand</span>
<span class="t m" style="left:772.30px;top:295.00px;font-size:15.5px;line-height:15.5px;color:#333;letter-spacing:0.188px;">Status</span>
<span class="t m" style="left:986.91px;top:329.00px;font-size:13px;line-height:13px;color:#585858;letter-spacing:0.371px;">offen</span>
<span class="t m" style="left:772.30px;top:366.00px;font-size:15.5px;line-height:15.5px;color:#333;letter-spacing:0.222px;">Notizen</span>
<span class="t m" style="left:1031.46px;top:404.00px;font-size:12px;line-height:12px;color:#333;letter-spacing:0.035px;">Schriftart</span>
<span class="t m" style="left:1128.21px;top:404.00px;font-size:12px;line-height:12px;color:#333;letter-spacing:0.204px;">Größe</span>
<span class="t m" style="left:776.91px;top:755.00px;font-size:13px;line-height:13px;color:#fff;transform:scaleX(0.9057);color:#fff;-webkit-text-stroke:0.5px #fff;">DATEIEN</span>
<span class="t m" style="left:856.91px;top:755.00px;font-size:13px;line-height:13px;color:#fff;transform:scaleX(0.9266);color:#fff;-webkit-text-stroke:0.5px #fff;">PINNWAND BONDRUCK</span>
<span class="t m" style="left:1024.41px;top:755.00px;font-size:13px;line-height:13px;color:#fff;transform:scaleX(0.9177);color:#fff;-webkit-text-stroke:0.5px #fff;">BENACHRICHTIGUNGSMAIL SENDEN</span>
<span class="t m" style="left:1268.41px;top:755.00px;font-size:13px;line-height:13px;color:#fff;transform:scaleX(0.8980);color:#fff;-webkit-text-stroke:0.5px #fff;">ABBRECHEN</span>
<span class="t m" style="left:1371.41px;top:755.00px;font-size:13px;line-height:13px;color:#fff;transform:scaleX(0.8920);color:#fff;-webkit-text-stroke:0.5px #fff;">SPEICHERN</span>
<!-- green highlight annotation -->
<div class="a" style="left:373.5px;top:681px;width:332px;height:37px;border:7px solid #00f400;background:rgba(0,255,0,0.125)"></div>
</body></html>
